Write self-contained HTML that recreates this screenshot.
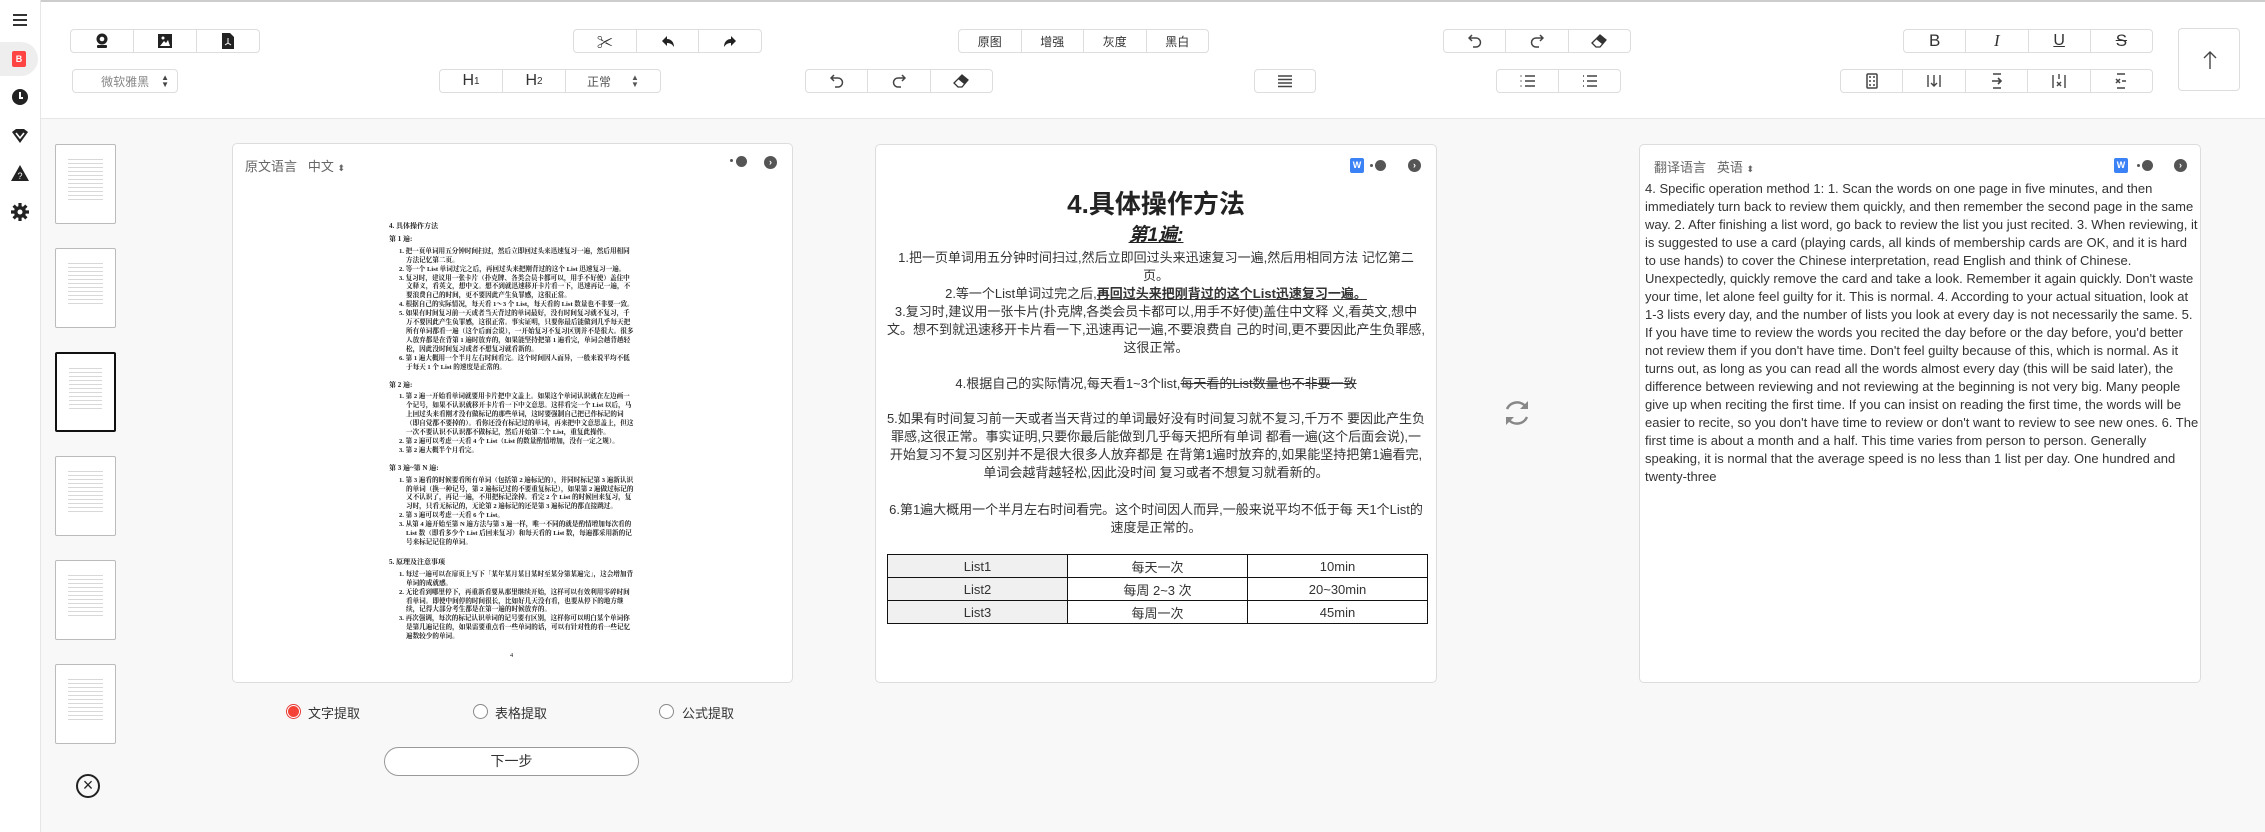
<!DOCTYPE html>
<html><head><meta charset="utf-8">
<style>
*{margin:0;padding:0;box-sizing:border-box}
body{width:2265px;height:832px;overflow:hidden;background:#f8f8f8;font-family:"Liberation Sans","Noto Sans CJK SC",sans-serif;color:#333;position:relative}
.abs{position:absolute}
#side{left:0;top:0;width:41px;height:832px;background:#fff;border-right:1px solid #e6e6e6}
#tb{left:41px;top:0;width:2224px;height:119px;background:#fff;border-top:2px solid #ccc;border-bottom:1px solid #e6e6e6}
.grp{position:absolute;display:flex;border:1px solid #ddd;border-radius:4px;height:24px;background:#fff}
.grp div{flex:1;display:flex;align-items:center;justify-content:center;border-left:1px solid #ddd;font-size:12px;color:#333}
.grp div:first-child{border-left:none}
.panel{position:absolute;background:#fff;border:1px solid #ddd;border-radius:5px}
.c{position:absolute;left:0;right:0;text-align:center;font-size:13px;line-height:18px;color:#333;white-space:nowrap}
.thumb{position:absolute;left:55px;width:61px;height:80px;background:#fff;border:1px solid #bbb;border-radius:2px}
.thumb::after{content:"";position:absolute;left:12px;right:12px;top:14px;bottom:20px;background:repeating-linear-gradient(#d8d8d8 0 1px,transparent 1px 4px)}
.doc{position:absolute;left:389px;top:218px;width:245px;font-size:6.6px;line-height:8.9px;color:#222;font-weight:bold;font-family:"Liberation Serif","Noto Serif CJK SC",serif}
.doc p{margin:0 0 0 17px;text-indent:-7px;}
.doc h4{font-size:7px;margin:4px 0 4px 0}
td{border:1.5px solid #111;text-align:center;font-size:13px;height:23px;color:#333}
.radio{position:absolute;width:15px;height:15px;border:1px solid #888;border-radius:50%;background:#fff}
.rl{position:absolute;font-size:13px;color:#333}
</style></head><body>
<div id="side" class="abs">
 <div class="abs" style="left:13px;top:14px;width:14px;height:2px;background:#333;box-shadow:0 5px 0 #333,0 10px 0 #333"></div>
 <div class="abs" style="left:0;top:42px;width:38px;height:34px;background:#eee;border-radius:0 17px 17px 0"></div>
 <div class="abs" style="left:12px;top:51px;width:14px;height:16px;background:#f44;border-radius:2px;color:#fff;font-size:9px;font-weight:bold;text-align:center;line-height:16px">B</div>
 <div class="abs" style="left:12px;top:89px;width:16px;height:16px;background:#222;border-radius:50%"><div class="abs" style="left:7px;top:3px;width:2px;height:6px;background:#fff"></div><div class="abs" style="left:7px;top:8px;width:4px;height:2px;background:#fff"></div></div>
 <svg class="abs" style="left:11px;top:128px" width="18" height="16" viewBox="0 0 18 16"><path d="M1 4 L5 1 H13 L17 4 L9 15 Z" fill="#222"/><path d="M5 5 L9 10 L13 5" stroke="#fff" stroke-width="1.6" fill="none"/></svg>
 <svg class="abs" style="left:11px;top:165px" width="18" height="16" viewBox="0 0 18 16"><path d="M9 0 L18 16 H0 Z" fill="#222"/><text x="9" y="14" font-size="9" fill="#fff" text-anchor="middle" font-family="Liberation Sans">?</text></svg>
 <svg class="abs" style="left:11px;top:203px" width="18" height="18" viewBox="0 0 18 18"><circle cx="9" cy="9" r="6" fill="#222"/><g stroke="#222" stroke-width="3.2"><path d="M9 0V18M0 9H18M2.6 2.6L15.4 15.4M15.4 2.6L2.6 15.4"/></g><circle cx="9" cy="9" r="2.5" fill="#fff"/></svg>
</div>
<div id="tb" class="abs"></div>

<!-- row 1 -->
<div class="grp" style="left:70px;top:29px;width:190px"><div><svg width="14" height="16" viewBox="0 0 14 16"><circle cx="7" cy="6" r="5.5" fill="#222"/><circle cx="7" cy="6" r="2.3" fill="#fff"/><rect x="2" y="12" width="10" height="3" rx="1" fill="#222"/></svg></div><div><svg width="14" height="14"><rect width="14" height="14" fill="#222"/><path d="M2 12L6 7L8 9L10 6L12 12Z" fill="#fff"/><circle cx="5" cy="4" r="1.5" fill="#fff"/></svg></div><div><svg width="12" height="16"><path d="M0 0H8L12 4V16H0Z" fill="#222"/><path d="M6 5V10L3 12M6 10L9 12" stroke="#fff" stroke-width="1" fill="none"/></svg></div></div>
<div class="grp" style="left:573px;top:29px;width:189px"><div style="font-size:16px">✂</div><div><svg width="14" height="14"><path d="M6 2L1 7L6 12V9C9 9 11 10 13 13C13 8 10 5 6 5Z" fill="#222"/></svg></div><div><svg width="14" height="14"><path d="M8 2L13 7L8 12V9C5 9 3 10 1 13C1 8 4 5 8 5Z" fill="#222"/></svg></div></div>
<div class="grp" style="left:958px;top:29px;width:251px"><div>原图</div><div>增强</div><div>灰度</div><div>黑白</div></div>
<div class="grp" style="left:1443px;top:29px;width:188px"><div><svg width="14" height="16"><path d="M4 2L1 5L4 8M1 5H8A4.5 4.5 0 0 1 8 14H5" stroke="#444" stroke-width="1.5" fill="none"/></svg></div><div><svg width="14" height="16"><path d="M10 2L13 5L10 8M13 5H6A4.5 4.5 0 0 0 6 14H9" stroke="#444" stroke-width="1.5" fill="none"/></svg></div><div><svg width="16" height="14"><path d="M9 1L15 6L9 13H5L1 9Z" fill="#fff" stroke="#333" stroke-width="1.3"/><path d="M9 1L15 6L11 10L5 5Z" fill="#333"/></svg></div></div>
<div class="grp" style="left:1903px;top:29px;width:250px"><div style="font-size:17px">B</div><div style="font-size:17px;font-style:italic;font-family:'Liberation Serif',serif">I</div><div style="font-size:16px;text-decoration:underline">U</div><div style="font-size:17px;text-decoration:line-through">S</div></div>
<!-- up -->
<div class="abs" style="left:2178px;top:28px;width:62px;height:63px;border:1px solid #ddd;border-radius:4px;background:#fff"><svg class="abs" style="left:24px;top:22px" width="14" height="18"><path d="M7 1V18M1 7L7 1L13 7" stroke="#444" stroke-width="1.4" fill="none"/></svg></div>
<!-- row 2 -->
<div class="grp" style="left:72px;top:69px;width:106px"><div style="justify-content:flex-end;padding-right:8px;color:#888">微软雅黑<span style="margin-left:12px;font-size:8px;line-height:7px;display:inline-block;color:#444">▲<br>▼</span></div></div>
<div class="grp" style="left:439px;top:69px;width:222px"><div style="flex:0 0 62px;font-size:16px">H<sub style="font-size:10px">1</sub></div><div style="flex:0 0 63px;font-size:16px">H<sub style="font-size:10px">2</sub></div><div style="color:#555">正常<span style="margin-left:20px;font-size:8px;line-height:7px;display:inline-block">▲<br>▼</span></div></div>
<div class="grp" style="left:805px;top:69px;width:188px"><div><svg width="14" height="16"><path d="M4 2L1 5L4 8M1 5H8A4.5 4.5 0 0 1 8 14H5" stroke="#444" stroke-width="1.5" fill="none"/></svg></div><div><svg width="14" height="16"><path d="M10 2L13 5L10 8M13 5H6A4.5 4.5 0 0 0 6 14H9" stroke="#444" stroke-width="1.5" fill="none"/></svg></div><div><svg width="16" height="14"><path d="M9 1L15 6L9 13H5L1 9Z" fill="#fff" stroke="#333" stroke-width="1.3"/><path d="M9 1L15 6L11 10L5 5Z" fill="#333"/></svg></div></div>
<div class="grp" style="left:1254px;top:69px;width:62px"><div><svg width="16" height="14"><path d="M1 2H15M1 5.5H15M1 9H15M1 12.5H15" stroke="#444" stroke-width="1.6"/></svg></div></div>
<div class="grp" style="left:1496px;top:69px;width:125px"><div><svg width="16" height="14"><path d="M5 2H15M5 7H15M5 12H15" stroke="#444" stroke-width="1.6"/><path d="M1 1V3M1 6V8M1 11V13" stroke="#777"/></svg></div><div><svg width="16" height="14"><path d="M5 2H15M5 7H15M5 12H15" stroke="#444" stroke-width="1.6"/><path d="M1 2H2M1 7H2M1 12H2" stroke="#444" stroke-width="1.6"/></svg></div></div>
<div class="grp" style="left:1840px;top:69px;width:313px"><div><svg width="12" height="16"><rect x="1" y="1" width="10" height="14" rx="1" fill="none" stroke="#444" stroke-width="1.5"/><path d="M3 4H5M7 4H9M3 8H5M7 8H9M3 12H5M7 12H9" stroke="#444" stroke-width="1.6"/></svg></div><div><svg width="14" height="16"><path d="M1 2V14M13 2V14M7 2V13M4 10L7 13L10 10" stroke="#444" stroke-width="1.4" fill="none"/></svg></div><div><svg width="14" height="16"><path d="M3 1H11M3 15H11M2 8H11M8 5L11 8L8 11" stroke="#444" stroke-width="1.6" fill="none"/></svg></div><div><svg width="14" height="16"><path d="M1 2V15M13 2V15M7 1V6M5 9L9 13M9 9L5 13" stroke="#444" stroke-width="1.4" fill="none"/></svg></div><div><svg width="14" height="16"><path d="M3 1H11M3 15H11M2 6L6 10M6 6L2 10M8 8H12" stroke="#444" stroke-width="1.5" fill="none"/></svg></div></div>

<!-- thumbnails -->
<div class="thumb" style="top:144px"></div>
<div class="thumb" style="top:248px"></div>
<div class="thumb" style="top:352px;border:2px solid #111"></div>
<div class="thumb" style="top:456px"></div>
<div class="thumb" style="top:560px"></div>
<div class="thumb" style="top:664px"></div>
<div class="abs" style="left:76px;top:774px;width:24px;height:24px;border:2px solid #222;border-radius:50%;text-align:center;line-height:19px;font-size:18px;color:#222">×</div>

<!-- panel 1 -->
<div class="panel" style="left:232px;top:143px;width:561px;height:540px"></div>
<div class="abs" style="left:245px;top:156px;font-size:13px;color:#666">原文语言&nbsp;&nbsp; 中文 <span style="font-size:9px">⬍</span></div>
<div class="abs" style="left:730px;top:159px;width:3px;height:3px;background:#555;border-radius:50%"></div>
<div class="abs" style="left:736px;top:156px;width:11px;height:11px;background:#555;border-radius:50%"></div>
<div class="abs" style="left:764px;top:156px;width:13px;height:13px;background:#555;border-radius:50%;color:#fff;font-size:9px;text-align:center;line-height:13px;font-weight:bold">›</div>
<div class="doc">
<h4>4. 具体操作方法</h4>
<h4>第 1 遍:</h4>
<p>1. 把一页单词用五分钟时间扫过，然后立即回过头来迅速复习一遍，然后用相同方法记忆第二页。</p>
<p>2. 等一个 List 单词过完之后，再回过头来把刚背过的这个 List 迅速复习一遍。</p>
<p>3. 复习时，建议用一张卡片（扑克牌、各类会员卡都可以，用手不好使）盖住中文释义，看英文，想中文。想不到就迅速移开卡片看一下，迅速再记一遍，不要浪费自己的时间，更不要因此产生负罪感，这很正常。</p>
<p>4. 根据自己的实际情况，每天看 1～3 个 List，每天看的 List 数量也不非要一致。</p>
<p>5. 如果有时间复习前一天或者当天背过的单词最好，没有时间复习就不复习，千万不要因此产生负罪感，这很正常。事实证明，只要你最后能做到几乎每天把所有单词都看一遍（这个后面会说），一开始复习不复习区别并不是很大。很多人放弃都是在背第 1 遍时放弃的，如果能坚持把第 1 遍看完，单词会越背越轻松，因此没时间复习或者不想复习就看新的。</p>
<p>6. 第 1 遍大概用一个半月左右时间看完。这个时间因人而异，一般来说平均不低于每天 1 个 List 的速度是正常的。</p>
<h4 style="margin-top:8px">第 2 遍:</h4>
<p>1. 第 2 遍一开始看单词就要用卡片把中文盖上。如果这个单词认识就在左边画一个记号，如果不认识就移开卡片看一下中文意思。这样看完一个 List 以后，马上回过头来看刚才没有做标记的那些单词，这时要强制自己把已作标记的词（即自觉都不要掉的）。看你还没有标记过的单词，再来把中文意思盖上，但这一次不要认识不认识都不做标记，然后开始第二个 List，重复此操作。</p>
<p>2. 第 2 遍可以考虑一天看 4 个 List（List 的数量酌情增加，没有一定之规）。</p>
<p>3. 第 2 遍大概半个月看完。</p>
<h4 style="margin-top:8px">第 3 遍~第 N 遍:</h4>
<p>1. 第 3 遍看的时候要看所有单词（包括第 2 遍标记的），并同时标记第 3 遍新认识的单词（换一种记号，第 2 遍标记过的不要重复标记），如果第 2 遍做过标记的又不认识了，再记一遍，不用把标记涂掉。看完 2 个 List 的时候回来复习，复习时，只看无标记的，无论第 2 遍标记的还是第 3 遍标记的都直接跳过。</p>
<p>2. 第 3 遍可以考虑一天看 6 个 List。</p>
<p>3. 从第 4 遍开始至第 N 遍方法与第 3 遍一样，唯一不同的就是酌情增加每次看的 List 数（即看多少个 List 后回来复习）和每天看的 List 数，每遍都采用新的记号来标记记住的单词。</p>
<h4 style="margin-top:10px">5. 原理及注意事项</h4>
<p>1. 每过一遍可以在扉页上写下「某年某月某日某时至某分第某遍完」，这会增加背单词的成就感。</p>
<p>2. 无论看到哪里停下，再重新看要从那里继续开始，这样可以有效利用零碎时间看单词。即使中间停的时间很长，比如好几天没有看，也要从停下的地方继续，记得大部分考生都是在第一遍的时候放弃的。</p>
<p>3. 再次强调，每次的标记认识单词的记号要有区别，这样你可以明白某个单词你是第几遍记住的，如果需要重点看一些单词的话，可以有针对性的看一些记忆遍数较少的单词。</p>
<div style="text-align:center;margin-top:10px;font-weight:normal">4</div>
</div>

<!-- radios -->
<div class="radio" style="left:286px;top:704px;border:1px solid #e53935;"><div class="abs" style="left:1px;top:1px;width:11px;height:11px;border-radius:50%;background:#f44336"></div></div>
<div class="rl" style="left:308px;top:703px">文字提取</div>
<div class="radio" style="left:473px;top:704px"></div>
<div class="rl" style="left:495px;top:703px">表格提取</div>
<div class="radio" style="left:659px;top:704px"></div>
<div class="rl" style="left:682px;top:703px">公式提取</div>
<div class="abs" style="left:384px;top:747px;width:255px;height:29px;border:1px solid #999;border-radius:15px;background:#fff;text-align:center;line-height:27px;font-size:14px;color:#333">下一步</div>

<!-- panel 2 -->
<div class="panel" style="left:875px;top:144px;width:562px;height:539px">
 <div class="abs" style="left:474px;top:13px;width:14px;height:15px;background:#3b82f6;border-radius:2px;color:#fff;font-size:9px;font-weight:bold;text-align:center;line-height:15px">W</div>
 <div class="abs" style="left:494px;top:19px;width:3px;height:3px;background:#555;border-radius:50%"></div>
 <div class="abs" style="left:499px;top:15px;width:11px;height:11px;background:#555;border-radius:50%"></div>
 <div class="abs" style="left:532px;top:14px;width:13px;height:13px;background:#555;border-radius:50%;color:#fff;font-size:9px;text-align:center;line-height:13px;font-weight:bold">›</div>
 <div class="c" style="top:41px;font-size:26px;line-height:36px;font-weight:bold;color:#222">4.具体操作方法</div>
 <div class="c" style="top:80px;font-size:19px;line-height:22px;font-weight:bold;font-style:italic;color:#222"><u>第1遍:</u></div>
 <div class="c" style="top:104px">1.把一页单词用五分钟时间扫过,然后立即回过头来迅速复习一遍,然后用相同方法 记忆第二</div>
 <div class="c" style="top:122px">页。</div>
 <div class="c" style="top:140px">2.等一个List单词过完之后,<b><u>再回过头来把刚背过的这个List迅速复习一遍。</u></b></div>
 <div class="c" style="top:158px">3.复习时,建议用一张卡片(扑克牌,各类会员卡都可以,用手不好使)盖住中文释 义,看英文,想中</div>
 <div class="c" style="top:176px">文。想不到就迅速移开卡片看一下,迅速再记一遍,不要浪费自 己的时间,更不要因此产生负罪感,</div>
 <div class="c" style="top:194px">这很正常。</div>
 <div class="c" style="top:230px">4.根据自己的实际情况,每天看1~3个list,<s>每天看的List数量也不非要一致</s></div>
 <div class="c" style="top:265px">5.如果有时间复习前一天或者当天背过的单词最好没有时间复习就不复习,千万不 要因此产生负</div>
 <div class="c" style="top:283px">罪感,这很正常。事实证明,只要你最后能做到几乎每天把所有单词 都看一遍(这个后面会说),一</div>
 <div class="c" style="top:301px">开始复习不复习区别并不是很大很多人放弃都是 在背第1遍时放弃的,如果能坚持把第1遍看完,</div>
 <div class="c" style="top:319px">单词会越背越轻松,因此没时间 复习或者不想复习就看新的。</div>
 <div class="c" style="top:356px">6.第1遍大概用一个半月左右时间看完。这个时间因人而异,一般来说平均不低于每 天1个List的</div>
 <div class="c" style="top:374px">速度是正常的。</div>
 <table class="abs" style="left:11px;top:409px;width:541px;border-collapse:collapse">
  <tr><td style="background:#f0f0f0;width:180px">List1</td><td style="width:180px">每天一次</td><td>10min</td></tr>
  <tr><td style="background:#f0f0f0">List2</td><td>每周 2~3 次</td><td>20~30min</td></tr>
  <tr><td style="background:#f0f0f0">List3</td><td>每周一次</td><td>45min</td></tr>
 </table>
</div>

<!-- refresh -->
<svg class="abs" style="left:1502px;top:398px" width="30" height="30" viewBox="0 0 30 30"><path d="M24 9A11 11 0 0 0 5 11" stroke="#888" stroke-width="2.5" fill="none"/><path d="M6 21A11 11 0 0 0 25 19" stroke="#888" stroke-width="2.5" fill="none"/><path d="M26 3V11H18Z" fill="#888"/><path d="M4 27V19H12Z" fill="#888"/></svg>

<!-- panel 3 -->
<div class="panel" style="left:1639px;top:144px;width:562px;height:539px">
 <div class="abs" style="left:14px;top:12px;font-size:13px;color:#666">翻译语言&nbsp;&nbsp; 英语 <span style="font-size:9px">⬍</span></div>
 <div class="abs" style="left:474px;top:13px;width:14px;height:15px;background:#3b82f6;border-radius:2px;color:#fff;font-size:9px;font-weight:bold;text-align:center;line-height:15px">W</div>
 <div class="abs" style="left:497px;top:19px;width:3px;height:3px;background:#555;border-radius:50%"></div>
 <div class="abs" style="left:502px;top:15px;width:11px;height:11px;background:#555;border-radius:50%"></div>
 <div class="abs" style="left:534px;top:14px;width:13px;height:13px;background:#555;border-radius:50%;color:#fff;font-size:9px;text-align:center;line-height:13px;font-weight:bold">›</div>
 <div class="abs" style="left:5px;top:35px;width:555px;font-size:13px;line-height:18px;color:#333">4. Specific operation method 1: 1. Scan the words on one page in five minutes, and then<br>immediately turn back to review them quickly, and then remember the second page in the same<br>way. 2. After finishing a list word, go back to review the list you just recited. 3. When reviewing, it<br>is suggested to use a card (playing cards, all kinds of membership cards are OK, and it is hard<br>to use hands) to cover the Chinese interpretation, read English and think of Chinese.<br>Unexpectedly, quickly remove the card and take a look. Remember it again quickly. Don't waste<br>your time, let alone feel guilty for it. This is normal. 4. According to your actual situation, look at<br>1-3 lists every day, and the number of lists you look at every day is not necessarily the same. 5.<br>If you have time to review the words you recited the day before or the day before, you'd better<br>not review them if you don't have time. Don't feel guilty because of this, which is normal. As it<br>turns out, as long as you can read all the words almost every day (this will be said later), the<br>difference between reviewing and not reviewing at the beginning is not very big. Many people<br>give up when reciting the first time. If you can insist on reading the first time, the words will be<br>easier to recite, so you don't have time to review or don't want to review to see new ones. 6. The<br>first time is about a month and a half. This time varies from person to person. Generally<br>speaking, it is normal that the average speed is no less than 1 list per day. One hundred and<br>twenty-three</div>
</div>
</body></html>
